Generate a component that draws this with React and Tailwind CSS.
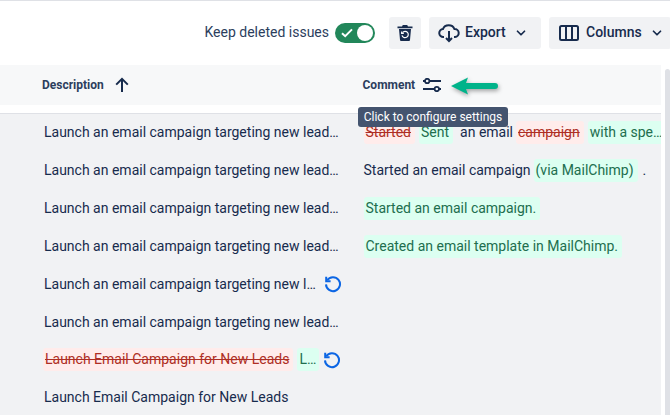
import React from "react";
import { ChevronDown } from "lucide-react";

const Del = ({ children, className = "" }) => (
  <span className={"bg-[#ffeceb] text-[#ae2e24] line-through pl-[2px] pr-[4px] rounded-[3px] py-[1px] shrink-0 " + className}>{children}</span>
);
const Ins = ({ children, className = "" }) => (
  <span className={"bg-[#dcfff1] text-[#216e4e] pl-[2px] pr-[4px] rounded-[3px] py-[1px] " + className}>{children}</span>
);

const Restore = () => (
  <svg width="18" height="18" viewBox="0 0 18 18" fill="none" className="shrink-0">
    <path d="M3.2 5.2 A7 7 0 1 1 2 9.4" stroke="#0c66e4" strokeWidth="2" />
    <path d="M2.2 1.8 V6.2 H6.6" stroke="#0c66e4" strokeWidth="2" fill="none" />
  </svg>
);

const Row = ({ desc, comment }) => (
  <div className="h-[37.9px] flex items-center shrink-0">
    <div className="w-[320px] ml-[44px] shrink-0 flex items-center">{desc}</div>
    <div className="flex-1 min-w-0 flex items-center whitespace-nowrap overflow-hidden -ml-[1px] pl-[0.5px]">{comment}</div>
  </div>
);

const T = ({ w, children }) => <span className={"truncate block " + w}>{children}</span>;
const LONG = "Launch an email campaign targeting new leads in the region";

export default function App() {
  return (
    <div className="w-[670px] h-[415px] overflow-hidden bg-white flex flex-col text-[14px] text-[#172b4d] border-t border-[#dfe1e6]" style={{ fontFamily: "Roboto, sans-serif" }}>
      <div className="h-[64px] shrink-0 flex items-center justify-end gap-[8px] -mr-[1px] pb-[1px]">
        <span className="text-[#2c3e5d] mr-[-1px]">Keep deleted issues</span>
        <div className="w-[40px] h-[20px] rounded-full bg-[#22875a] flex items-center justify-between pl-[6px] pr-[2px] ml-[-1px] mr-[6px]">
          <svg width="12" height="10" viewBox="0 0 12 10" fill="none"><path d="M1 5.2 L4.2 8.2 L11 1.4" stroke="white" strokeWidth="2" /></svg>
          <div className="w-[16px] h-[16px] rounded-full bg-white" />
        </div>
        <div className="w-[32px] h-[32px] rounded-[3px] bg-[#f1f2f4] flex items-center justify-center">
          <svg width="18" height="18" viewBox="0 0 18 18">
            <path d="M1.5 2.4 H6 L6.8 1 H11.2 L12 2.4 H16.5 V4.2 H1.5 Z" fill="#172b4d" />
            <path fillRule="evenodd" d="M3 5 H15 L14 16 Q13.9 17 13 17 H5 Q4.1 17 4 16 Z" fill="#172b4d" />
            <path d="M6.5 8.6 A3.2 3.2 0 1 1 6 11.4" stroke="white" strokeWidth="1.2" fill="none" />
            <path d="M5.6 7.4 V9.4 H7.8" stroke="white" strokeWidth="1.1" fill="none" />
          </svg>
        </div>
        <div className="w-[112px] h-[32px] rounded-[3px] bg-[#f1f2f4] flex items-center pl-[9px] font-medium text-[#172b4d]">
          <svg width="22" height="20" viewBox="0 0 22 20" fill="none" stroke="#172b4d" strokeWidth="2">
            <path d="M6 14 H5.5 A4 4 0 0 1 5 6 A6 5.4 0 0 1 16.4 6 A4 4 0 0 1 17 14 H16" />
            <path d="M11 8 V18 M8 15 L11 18 L14 15" />
          </svg>
          <span className="ml-[5px]">Export</span>
          <ChevronDown size={14} strokeWidth={3} className="ml-[8px]" />
        </div>
        <div className="w-[122px] h-[32px] rounded-[3px] bg-[#f1f2f4] flex items-center pl-[10px] font-medium text-[#172b4d] shrink-0">
          <svg width="20" height="16" viewBox="0 0 20 16" fill="none" stroke="#172b4d" strokeWidth="2">
            <rect x="1" y="1" width="18" height="14" rx="1.5" />
            <path d="M7 1 V15 M13 1 V15" />
          </svg>
          <span className="ml-[7px]">Columns</span>
          <ChevronDown size={14} strokeWidth={3} className="ml-[8px]" />
        </div>
      </div>

      <div className="flex-1 min-h-0 flex">
        <div className="w-[661px] shrink-0 flex flex-col">
          <div className="relative h-[40px] shrink-0 bg-[#f7f8f9] flex items-center text-[12px] font-bold text-[#2c3e5d]">
            <div className="w-[320.5px] ml-[42px] shrink-0 flex items-center">
              <span>Description</span>
              <svg width="16" height="16" viewBox="0 0 16 16" fill="none" stroke="#172b4d" strokeWidth="2" className="ml-[10px]">
                <path d="M8 15 V2 M2.2 7.6 L8 1.8 L13.8 7.6" />
              </svg>
            </div>
            <span>Comment</span>
            <svg width="18" height="14" viewBox="0 0 18 14" fill="none" stroke="#172b4d" strokeWidth="1.8" className="ml-[8px]">
              <path d="M0 3 H2 M6.4 3 H18 M0 11 H11.6 M16 11 H18" />
              <circle cx="4.2" cy="3" r="2.2" />
              <circle cx="13.8" cy="11" r="2.2" />
            </svg>
            <svg width="56" height="24" viewBox="0 0 56 24" className="absolute left-[447px] top-[10px]" style={{ filter: "drop-shadow(1px 2px 2px rgba(0,0,0,0.35))" }}>
              <path d="M4 11 L21 2.5 L19 8 H48 Q51 8 51 11 Q51 14 48 14 H19 L21 19.5 Z" fill="#00b38a" />
            </svg>
            <div className="absolute left-[358px] top-[42px] h-[20px] w-[150px] rounded-[3px] bg-[#44546f] text-white text-[12px] font-normal flex items-center justify-center z-10">
              Click to configure settings
            </div>
          </div>
          <div className="h-[9px] shrink-0 bg-white border-b border-[#dfe1e6]" />
          <div className="flex-1 bg-[#f1f2f4] flex flex-col text-[#172b4d] -mt-[0.4px] pt-0">
            <Row desc={<T w="w-[295px]">{LONG}</T>} comment={<>
              <Del>Started</Del>
              <Ins className="ml-[4px] shrink-0">Sent</Ins>
              <span className="ml-[7px] shrink-0">an email</span>
              <Del className="ml-[3px]">campaign</Del>
              <Ins className="ml-[4px] shrink-0">with a spe…</Ins>
            </>} />
            <Row desc={<T w="w-[295px]">{LONG}</T>} comment={<>
              <span>Started an email campaign</span>
              <Ins className="ml-[3px]">(via MailChimp)</Ins>
              <span className="ml-[5px]">.</span>
            </>} />
            <Row desc={<T w="w-[295px]">{LONG}</T>} comment={<Ins>Started an email campaign.</Ins>} />
            <Row desc={<T w="w-[295px]">{LONG}</T>} comment={<Ins>Created an email template in MailChimp.</Ins>} />
            <Row desc={<><T w="w-[272px]">{LONG}</T><span className="ml-[8px]"><Restore /></span></>} />
            <Row desc={<T w="w-[295px]">{LONG}</T>} />
            <Row desc={<><Del className="-ml-[1px] whitespace-nowrap">Launch Email Campaign for New Leads</Del><Ins className="ml-[4px] !pl-[2px] !pr-[3px]">L…</Ins><span className="ml-[4px]"><Restore /></span></>} />
            <Row desc={<span>Launch Email Campaign for New Leads</span>} />
          </div>
        </div>
        <div className="w-[4px] shrink-0" />
        <div className="w-[5px] shrink-0 bg-[#dfe1e6] rounded-t-[3px] mt-[4px]" />
      </div>
    </div>
  );
}
